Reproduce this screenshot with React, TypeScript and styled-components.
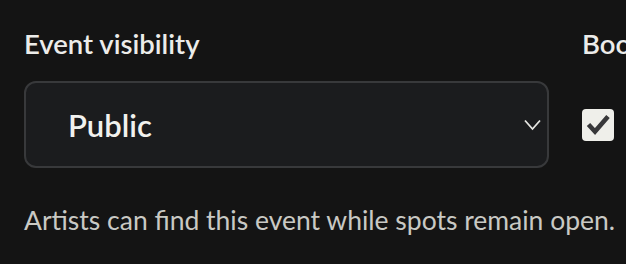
import React, { useState } from "react";
import styled, { createGlobalStyle } from "styled-components";

const GlobalStyle = createGlobalStyle`
  html, body {
    margin: 0;
    background: #141414;
    overflow: hidden;
  }
  body {
    font-family: Lato, "Noto Sans", sans-serif;
    color: #ececea;
  }
`;

const Page = styled.div`
  padding: 28px 0 0 24px;
  width: 700px;
`;

const FieldGrid = styled.div`
  display: grid;
  grid-template-columns: 525px auto;
  column-gap: 33px;
  row-gap: 21px;
  align-items: center;
`;

const Label = styled.label`
  font-size: 27.5px;
  line-height: 32px;
  font-weight: 600;
  color: #ececea;
  white-space: nowrap;
`;

const SelectBox = styled.div`
  height: 87px;
  box-sizing: border-box;
  border: 2px solid #38393b;
  border-radius: 12px;
  background: #1b1c1e;
  display: flex;
  align-items: center;
  padding: 0 6px 0 42px;
  cursor: pointer;
`;

const SelectValue = styled.span`
  flex: 1;
  font-size: 31px;
  font-weight: 600;
  color: #f1f1ee;
`;

const Chevron = styled.svg`
  width: 17px;
  height: 12px;
  flex: none;
`;

const CheckBox = styled.button<{ $checked: boolean }>`
  all: unset;
  width: 32px;
  height: 32px;
  border-radius: 4px;
  background: ${(p) => (p.$checked ? "#efefea" : "transparent")};
  border: ${(p) => (p.$checked ? "none" : "2px solid #555")};
  display: flex;
  align-items: center;
  justify-content: center;
  cursor: pointer;
`;

const Helper = styled.p`
  margin: 36px 0 0;
  font-size: 26.5px;
  line-height: 32px;
  color: #c9c9c4;
  white-space: nowrap;
`;

export default function App() {
  const [bookable, setBookable] = useState(true);

  return (
    <>
      <GlobalStyle />
      <Page>
        <FieldGrid>
          <Label>Event visibility</Label>
          <Label>Booking open</Label>
          <SelectBox>
            <SelectValue>Public</SelectValue>
            <Chevron viewBox="0 0 17 12" fill="none">
              <path d="M1 1.5 L8.5 10 L16 1.5" stroke="#e6e6e2" strokeWidth="1.8" />
            </Chevron>
          </SelectBox>
          <CheckBox $checked={bookable} onClick={() => setBookable(!bookable)}>
            {bookable && (
              <svg width="32" height="32" viewBox="0 0 32 32">
                <path
                  d="M6.5 15.5 L13 22.5 L26 7.5"
                  fill="none"
                  stroke="#38383a"
                  strokeWidth="4.6"
                  strokeLinejoin="miter"
                />
              </svg>
            )}
          </CheckBox>
        </FieldGrid>
        <Helper>Artists can find this event while spots remain open.</Helper>
      </Page>
    </>
  );
}
